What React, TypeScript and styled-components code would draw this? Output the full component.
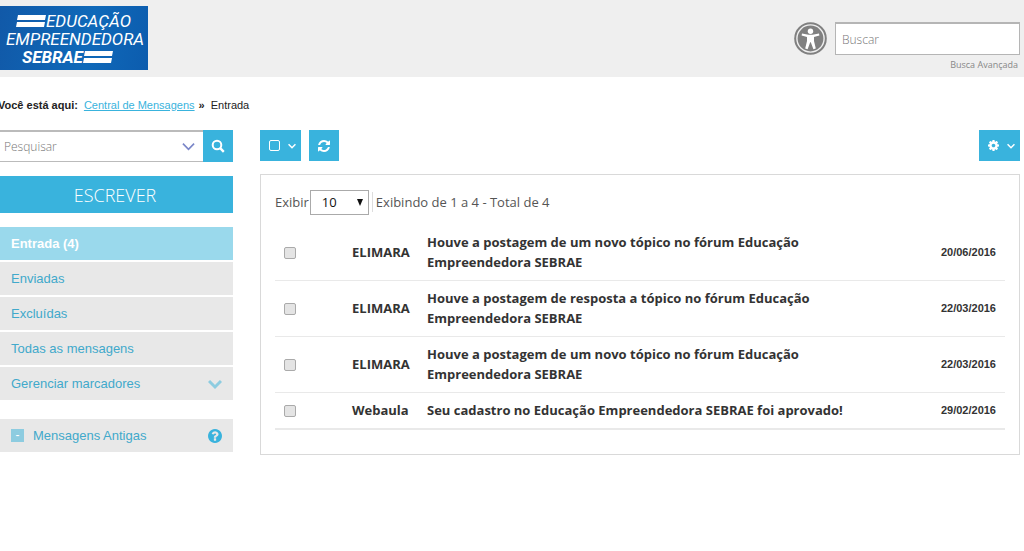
import React from "react";
import styled, { createGlobalStyle } from "styled-components";

const blue = "#39b3dd";
const sans = '"Liberation Sans", Arial, sans-serif';
const open = '"Open Sans", sans-serif';

const GlobalStyle = createGlobalStyle`
  *, *::before, *::after { box-sizing: border-box; }
  body { margin: 0; background: #fff; color: #333; font: 13px/20px ${open}; overflow-x: hidden; }
  button, input, select { font: inherit; margin: 0; border-radius: 0; }
  button { cursor: pointer; }
`;

const Header = styled.header`
  display: flex;
  justify-content: space-between;
  align-items: flex-start;
  height: 77px;
  padding: 6px 4px 0 0;
  background: #efefef;
`;

const Logo = styled.a`
  display: flex;
  flex-direction: column;
  width: 148px;
  height: 64px;
  padding: 6px 0 0 6px;
  background: linear-gradient(100deg, #1159a8, #0f69b9 60%, #0c5cae);
  color: #fff;
  font: italic 17px/18px Roboto, ${sans};
  text-decoration: none;
`;

const LogoLine = styled.span<{ $indent?: number; $bold?: boolean }>`
  display: flex;
  align-items: center;
  white-space: nowrap;
  padding-left: ${(p) => p.$indent || 0}px;
  font-weight: ${(p) => (p.$bold ? 700 : 400)};
`;

const HeaderTools = styled.div`
  display: flex;
  align-items: flex-start;
  gap: 8px;
  padding-top: 16px;
`;

const IconLink = styled.a`
  display: block;
  width: 33px;
  height: 33px;
`;

const SiteSearch = styled.form`
  display: flex;
  flex-direction: column;
  width: 185px;
`;

const SiteInput = styled.input`
  width: 100%;
  height: 33px;
  padding: 0 6px;
  border: 1px solid #b5b5b5;
  border-top-width: 2px;
  background: #fff;
  font-size: 12px;
  outline: none;
  &::placeholder { color: #777; opacity: 1; font-weight: 300; }
`;

const AdvancedLink = styled.a`
  align-self: flex-end;
  padding-right: 2px;
  color: #888;
  font-size: 9px;
  line-height: 20px;
  text-decoration: none;
`;

const Breadcrumb = styled.nav`
  display: flex;
  height: 53px;
  padding-top: 18px;
  color: #222;
  font: 11px/20px ${sans};
  white-space: pre;
  strong { margin-left: -2px; margin-right: 6px; }
  a { color: ${blue}; }
  b { margin: 0 6px 0 4px; }
`;

const Columns = styled.div`
  display: flex;
  align-items: flex-start;
  gap: 27px;
  padding-right: 4px;
`;

const Sidebar = styled.aside`
  flex: 0 0 233px;
  display: flex;
  flex-direction: column;
  font: 13px/20px ${sans};
`;

const Main = styled.main`
  flex: 1;
  min-width: 0;
`;

const MessageSearch = styled.form`
  display: flex;
  height: 32px;
  margin-bottom: 14px;
`;

const SearchField = styled.div`
  flex: 1;
  display: flex;
  align-items: center;
  padding: 0 8px 0 4px;
  border: solid #bbb;
  border-width: 2px 0 1px;
  input {
    flex: 1;
    min-width: 0;
    padding: 0;
    border: 0;
    outline: none;
    font: 12px/20px ${open};
  }
  input::placeholder { color: #777; opacity: 1; font-weight: 300; }
`;

const PlainButton = styled.button`
  display: flex;
  padding: 0;
  border: 0;
  background: none;
`;

const ToolButton = styled.button<{ $wide?: boolean }>`
  display: flex;
  align-items: center;
  justify-content: center;
  gap: 8px;
  width: ${(p) => (p.$wide ? 41 : 30)}px;
  height: 31px;
  padding: 0 0 0 ${(p) => (p.$wide ? 4 : 0)}px;
  border: 0;
  background: ${blue};
  color: #fff;
`;

const SearchButton = styled(ToolButton)`
  height: 32px;
`;

const WriteButton = styled.button`
  height: 37px;
  margin-bottom: 14px;
  padding: 0 3px 0 0;
  border: 0;
  background: ${blue};
  color: #fff;
  font: 300 18px/20px ${open};
`;

const FolderList = styled.ul`
  display: flex;
  flex-direction: column;
  gap: 2px;
  margin: 0 0 19px;
  padding: 0;
  list-style: none;
`;

const FolderLink = styled.a<{ $active?: boolean }>`
  display: flex;
  align-items: center;
  justify-content: space-between;
  height: 33px;
  padding: 0 11px;
  background: ${(p) => (p.$active ? "#9ad9ec" : "#e8e8e8")};
  color: ${(p) => (p.$active ? "#fff" : "#41a9cb")};
  font-weight: ${(p) => (p.$active ? 700 : 400)};
  text-decoration: none;
`;

const OldLabel = styled.span`
  display: flex;
  flex: 1;
  align-items: center;
  gap: 9px;
`;

const MinusBox = styled.span`
  width: 13px;
  height: 13px;
  background: #8dcce0;
  color: #fff;
  font-size: 12px;
  line-height: 12px;
  text-align: center;
`;

const HelpMark = styled.span`
  display: flex;
  color: ${blue};
`;

const Toolbar = styled.div`
  display: flex;
  gap: 8px;
  margin-bottom: 13px;
`;

const Spacer = styled.div`
  flex: 1;
`;

const Panel = styled.section`
  padding: 12px 14px 24px;
  border: 1px solid #d9d9d9;
`;

const Pager = styled.div`
  display: flex;
  align-items: center;
  height: 30px;
  margin-bottom: 8px;
  color: #555;
`;

const SelectBox = styled.div`
  position: relative;
  margin: 0 3px 0 1px;
  svg { position: absolute; right: 6px; top: 9px; pointer-events: none; }
`;

const PageSize = styled.select`
  display: block;
  appearance: none;
  width: 59px;
  height: 25px;
  padding: 0 0 0 11px;
  border: 1px solid #aaa;
  background: #fff;
  color: #111;
  line-height: 20px;
`;

const PagerInfo = styled.span`
  padding-left: 3px;
  border-left: 1px solid #ddd;
`;

const MessageTable = styled.table`
  width: 100%;
  table-layout: fixed;
  border-spacing: 0;
  border-bottom: 2px solid #e9e9e9;
  font-weight: 700;
  td { padding: 7px 0 8px; border-bottom: 1px solid #e9e9e9; vertical-align: middle; }
  tr:last-child td { border-bottom: 0; }
`;

const CheckCell = styled.td`
  width: 77px;
`;

const SenderCell = styled.td`
  width: 75px;
`;

const DateCell = styled.td`
  width: 125px;
  && { padding-right: 9px; }
  text-align: right;
  font: 700 11px/20px ${sans};
`;

const Check = styled.input`
  appearance: none;
  display: block;
  width: 12px;
  height: 12px;
  && { margin: 2px 0 0 9px; border-radius: 2px; }
  border: 1px solid #aaa;
  background: #e4e4e4;
`;

const Chevron = ({ size, color = "currentColor", stroke = 2 }: { size: number; color?: string; stroke?: number }) => (
  <svg width={size} height={size} viewBox="0 0 14 14" fill="none" stroke={color} strokeWidth={stroke}>
    <path d="M1 4l6 6 6-6" />
  </svg>
);

const Glyph = ({ d, size = 12 }: { d: string; size?: number }) => (
  <svg width={size} height={size} viewBox="0 0 1536 1536" fill="currentColor">
    <path d={d} />
  </svg>
);

const refreshPath =
  "M1511 928q0 5-1 7-64 268-268 434.5T764 1536q-146 0-282.5-55T238 1324l-129 129q-19 19-45 19t-45-19-19-45V960q0-26 19-45t45-19h448q26 0 45 19t19 45-19 45l-137 137q71 66 161 102t187 36q134 0 250-65t186-179q11-17 53-117 8-23 30-23h192q13 0 22.5 9.5t9.5 22.5zm25-800v448q0 26-19 45t-45 19h-448q-26 0-45-19t-19-45 19-45l138-138Q969 256 768 256q-134 0-250 65T332 500q-11 17-53 117-8 23-30 23H50q-13 0-22.5-9.5T18 608v-7q65-268 270-434.5T768 0q146 0 284 55.5T1297 212l130-129q19-19 45-19t45 19 19 45z";
const cogPath =
  "M1024 768q0-106-75-181t-181-75-181 75-75 181 75 181 181 75 181-75 75-181zm512-109v222q0 12-8 23t-20 13l-185 28q-19 54-39 91 35 50 107 138 10 12 10 25t-9 23q-27 37-99 108t-94 71q-12 0-26-9l-138-108q-44 23-91 38-16 136-29 186-7 28-36 28H657q-14 0-24.5-8.5T621 1506l-28-184q-49-16-90-37l-141 107q-10 9-25 9-14 0-25-11-126-114-165-168-7-10-7-23 0-12 8-23 15-21 51-66.5t54-70.5q-27-50-41-99L29 913q-13-2-21-12.5T0 877V655q0-12 8-23t19-13l186-28q14-46 39-92-40-57-107-138-10-12-10-24 0-10 9-23 26-36 98.5-107.5T337 135q13 0 26 10l138 107q44-23 91-38 16-136 29-186 7-28 36-28h222q14 0 24.5 8.5T915 30l28 184q49 16 90 37l142-107q9-9 24-9 13 0 25 10 129 119 165 170 7 8 7 22 0 12-8 23-15 21-51 66.5t-54 70.5q26 50 41 98l183 28q13 2 21 12.5t8 23.5z";
const helpPath =
  "M896 1248v-192q0-14-9-23t-23-9H672q-14 0-23 9t-9 23v192q0 14 9 23t23 9h192q14 0 23-9t9-23zm256-672q0-88-55.5-163T958 297t-170-41q-243 0-371 213-15 24 8 42l132 100q7 6 19 6 16 0 25-12 53-68 86-92 34-24 86-24 48 0 85.5 26t37.5 59q0 38-20 61t-68 45q-63 28-115.5 86.5T640 892v36q0 14 9 23t23 9h192q14 0 23-9t9-23q0-19 21.5-49.5T972 829q32-18 49-28.5t46-35 44.5-48 28-60.5 12.5-81zm384 192q0 209-103 385.5T1153.5 1433 768 1536t-385.5-103T103 1153.5 0 768t103-385.5T382.5 103 768 0t385.5 103T1433 382.5 1536 768z";

const LogoBars = () => (
  <svg width="30" height="14" viewBox="0 0 30 14" fill="#fff">
    <path d="M2 1h28l-1 5H1zM1 8h28l-1 5H0z" />
  </svg>
);

const AccessibilityIcon = () => (
  <svg width="33" height="33" viewBox="0 0 33 33">
    <circle cx="16.5" cy="16.5" r="16.3" fill="#808080" />
    <circle cx="16.5" cy="16.5" r="13.6" fill="none" stroke="#efefef" strokeWidth="1.4" />
    <circle cx="16.5" cy="9.3" r="2.7" fill="#fff" />
    <path fill="#fff" d="M8 11.6l6.5 1.2h4l6.5-1.2.4 1.8-5.4 1.7v4l1.8 7.3-2.4.8-2.6-7h-.6l-2.6 7-2.4-.8 1.8-7.3v-4l-5.4-1.7z" />
  </svg>
);

const SearchIcon = () => (
  <svg width="14" height="14" viewBox="0 0 14 14" fill="none" stroke="currentColor">
    <circle cx="6" cy="6" r="4.3" strokeWidth="2" />
    <path d="M9.2 9.2l3.6 3.6" strokeWidth="2.4" />
  </svg>
);

const folders = ["Enviadas", "Excluídas", "Todas as mensagens"];

const messages = [
  { from: "ELIMARA", subject: "Houve a postagem de um novo tópico no fórum Educação Empreendedora SEBRAE", date: "20/06/2016" },
  { from: "ELIMARA", subject: "Houve a postagem de resposta a tópico no fórum Educação Empreendedora SEBRAE", date: "22/03/2016" },
  { from: "ELIMARA", subject: "Houve a postagem de um novo tópico no fórum Educação Empreendedora SEBRAE", date: "22/03/2016" },
  { from: "Webaula", subject: "Seu cadastro no Educação Empreendedora SEBRAE foi aprovado!", date: "29/02/2016" },
];

export default function App() {
  return (
    <>
      <GlobalStyle />
      <Header>
        <Logo href="#">
          <LogoLine $indent={10}><LogoBars />EDUCAÇÃO</LogoLine>
          <LogoLine>EMPREENDEDORA</LogoLine>
          <LogoLine $indent={16} $bold>SEBRAE<LogoBars /></LogoLine>
        </Logo>
        <HeaderTools>
          <IconLink href="#" aria-label="Acessibilidade"><AccessibilityIcon /></IconLink>
          <SiteSearch>
            <SiteInput type="text" placeholder="Buscar" aria-label="Buscar" />
            <AdvancedLink href="#">Busca Avançada</AdvancedLink>
          </SiteSearch>
        </HeaderTools>
      </Header>

      <Breadcrumb>
        <strong>Você está aqui:</strong>
        <a href="#">Central de Mensagens</a>
        <b>»</b>
        <span>Entrada</span>
      </Breadcrumb>

      <Columns>
        <Sidebar>
          <MessageSearch>
            <SearchField>
              <input type="text" placeholder="Pesquisar" aria-label="Pesquisar" />
              <PlainButton type="button" aria-label="Opções de pesquisa">
                <Chevron size={13} color="#7a86c8" stroke={1.8} />
              </PlainButton>
            </SearchField>
            <SearchButton type="submit" aria-label="Pesquisar mensagens"><SearchIcon /></SearchButton>
          </MessageSearch>
          <WriteButton type="button">ESCREVER</WriteButton>
          <FolderList>
            <li><FolderLink href="#" $active>Entrada (4)</FolderLink></li>
            {folders.map((name) => (
              <li key={name}><FolderLink href="#">{name}</FolderLink></li>
            ))}
            <li>
              <FolderLink href="#">Gerenciar marcadores<Chevron size={14} color="#8dcce0" stroke={3} /></FolderLink>
            </li>
          </FolderList>
          <FolderLink href="#">
            <OldLabel><MinusBox>-</MinusBox>Mensagens Antigas</OldLabel>
            <HelpMark><Glyph d={helpPath} size={14} /></HelpMark>
          </FolderLink>
        </Sidebar>

        <Main>
          <Toolbar>
            <ToolButton $wide type="button" aria-label="Selecionar">
              <svg width="11" height="11" viewBox="0 0 11 11" fill="none" stroke="currentColor">
                <rect x="0.5" y="0.5" width="10" height="10" rx="1.5" />
              </svg>
              <Chevron size={8} stroke={2.6} />
            </ToolButton>
            <ToolButton type="button" aria-label="Atualizar"><Glyph d={refreshPath} /></ToolButton>
            <Spacer />
            <ToolButton $wide type="button" aria-label="Configurações">
              <Glyph d={cogPath} size={11} />
              <Chevron size={8} stroke={2.6} />
            </ToolButton>
          </Toolbar>
          <Panel>
            <Pager>
              <label htmlFor="page-size">Exibir</label>
              <SelectBox>
                <PageSize id="page-size" defaultValue="10">
                  <option>10</option>
                  <option>20</option>
                  <option>50</option>
                </PageSize>
                <svg width="6" height="7" viewBox="0 0 6 7"><path d="M0 0h6L3 7z" fill="#111" /></svg>
              </SelectBox>
              <PagerInfo>Exibindo de 1 a 4 - Total de 4</PagerInfo>
            </Pager>
            <MessageTable>
              <tbody>
                {messages.map((m, i) => (
                  <tr key={i}>
                    <CheckCell><Check type="checkbox" aria-label={`Selecionar mensagem de ${m.from}, ${m.date}`} /></CheckCell>
                    <SenderCell>{m.from}</SenderCell>
                    <td>{m.subject}</td>
                    <DateCell>{m.date}</DateCell>
                  </tr>
                ))}
              </tbody>
            </MessageTable>
          </Panel>
        </Main>
      </Columns>
    </>
  );
}
